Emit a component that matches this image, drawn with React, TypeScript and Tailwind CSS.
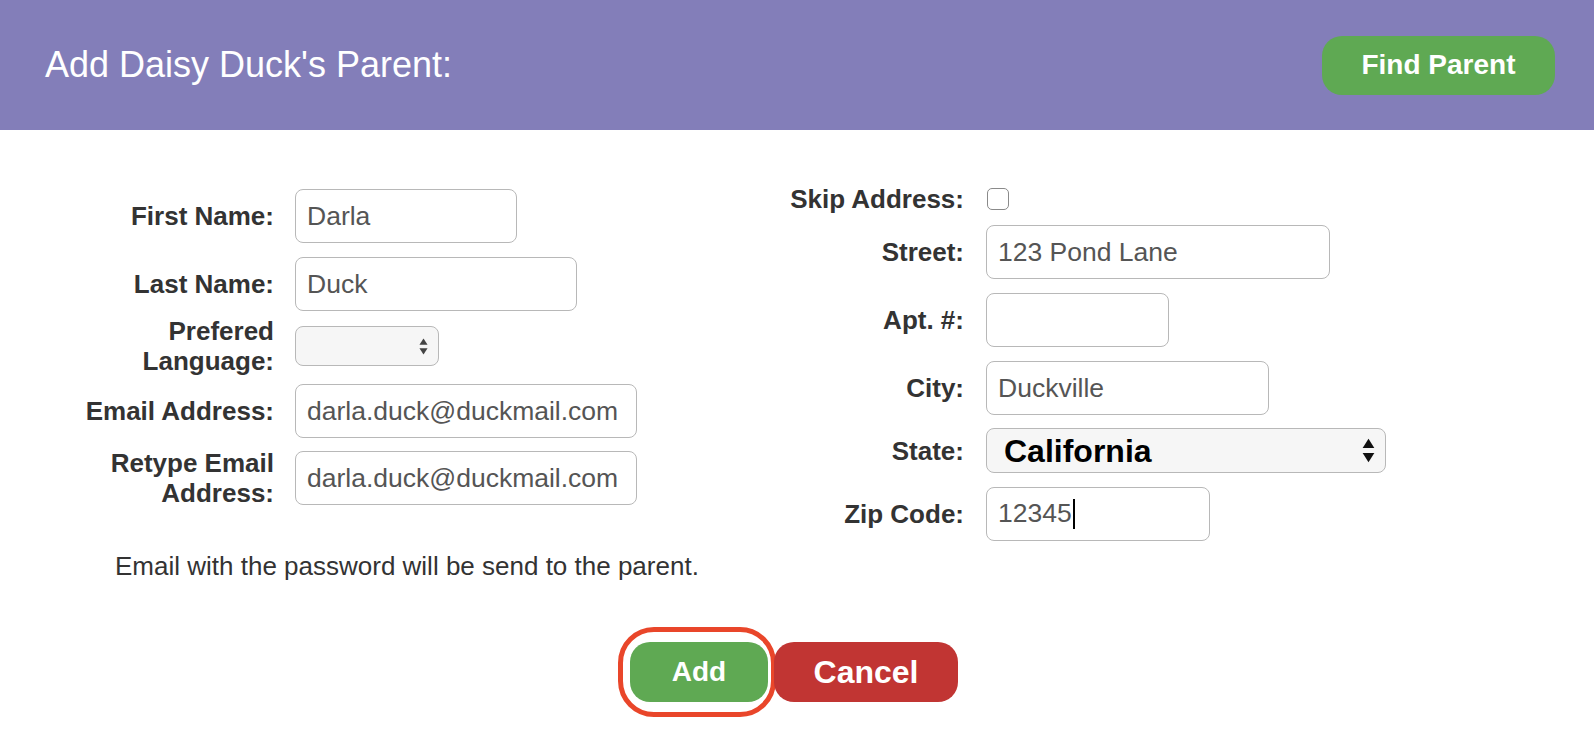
import React from "react";

const font = { fontFamily: '"Liberation Sans", Arial, Helvetica, sans-serif' };

const labelCls = "shrink-0 text-right font-bold text-[26px] leading-[30px] text-[#333]";
const inputCls =
  "h-[54px] rounded-[8px] border border-[#b8b8b8] bg-white px-[11px] text-[26.5px] text-[#555] outline-none";

function UpDown({ w, h, color }: { w: number; h: number; color: string }) {
  return (
    <svg width={w} height={h} viewBox="0 0 10 20" aria-hidden>
      <path d="M5 1 L9.5 8 L0.5 8 Z" fill={color} />
      <path d="M0.5 12 L9.5 12 L5 19 Z" fill={color} />
    </svg>
  );
}

function Row({
  label,
  width,
  children,
  className = "",
}: {
  label: React.ReactNode;
  width: string;
  children: React.ReactNode;
  className?: string;
}) {
  return (
    <div className={`flex items-center ${className}`}>
      <div className={`${labelCls} ${width}`}>{label}</div>
      {children}
    </div>
  );
}

export default function App() {
  return (
    <div className="min-h-[752px] w-full bg-white" style={font}>
      <header className="flex h-[130px] items-center justify-between bg-[#837eb9] pl-[45px] pr-[39px]">
        <h1 className="text-[36px] font-normal text-white">Add Daisy Duck's Parent:</h1>
        <button
          type="button"
          className="h-[59px] w-[233px] rounded-[20px] bg-[#5fa953] text-[28px] font-bold text-white"
        >
          Find Parent
        </button>
      </header>

      <div className="flex items-start pt-[54px]">
        {/* left column */}
        <div className="mt-[5px] flex w-[637px] flex-col">
          <Row label="First Name:" width="w-[274px]">
            <input readOnly value="Darla" className={`${inputCls} ml-[21px] w-[222px]`} />
          </Row>
          <Row label="Last Name:" width="w-[274px]" className="mt-[14px]">
            <input readOnly value="Duck" className={`${inputCls} ml-[21px] w-[282px]`} />
          </Row>
          <Row
            label={
              <>
                Prefered
                <br />
                Language:
              </>
            }
            width="w-[274px]"
            className="mt-[5px] h-[60px]"
          >
            <div className="ml-[21px] flex h-[40px] w-[144px] items-center justify-end rounded-[8px] border border-[#b8b8b8] bg-[#f6f6f6] pr-[10px]">
              <UpDown w={9} h={19} color="#444" />
            </div>
          </Row>
          <Row label="Email Address:" width="w-[274px]" className="mt-[8px]">
            <input
              readOnly
              value="darla.duck@duckmail.com"
              className={`${inputCls} ml-[21px] w-[342px]`}
            />
          </Row>
          <Row
            label={
              <>
                Retype Email
                <br />
                Address:
              </>
            }
            width="w-[274px]"
            className="mt-[10px] h-[60px]"
          >
            <input
              readOnly
              value="darla.duck@duckmail.com"
              className={`${inputCls} ml-[21px] w-[342px]`}
            />
          </Row>
        </div>

        {/* right column */}
        <div className="ml-[123px] flex flex-col">
          <Row label="Skip Address:" width="w-[204px]" className="h-[30px]">
            <span className="ml-[23px] block h-[22px] w-[22px] rounded-[5px] border border-[#8a8a8a] bg-white" />
          </Row>
          <Row label="Street:" width="w-[204px]" className="mt-[11px]">
            <input readOnly value="123 Pond Lane" className={`${inputCls} ml-[22px] w-[344px]`} />
          </Row>
          <Row label="Apt. #:" width="w-[204px]" className="mt-[14px]">
            <input readOnly value="" className={`${inputCls} ml-[22px] w-[183px]`} />
          </Row>
          <Row label="City:" width="w-[204px]" className="mt-[14px]">
            <input readOnly value="Duckville" className={`${inputCls} ml-[22px] w-[283px]`} />
          </Row>
          <Row label="State:" width="w-[204px]" className="mt-[13px]">
            <div className="ml-[22px] flex h-[45px] w-[400px] items-center justify-between rounded-[8px] border border-[#b8b8b8] bg-[#f6f6f6] pl-[17px] pr-[10px]">
              <span className="text-[32px] font-bold leading-none text-black">California</span>
              <UpDown w={13} h={27} color="#111" />
            </div>
          </Row>
          <Row label="Zip Code:" width="w-[204px]" className="mt-[14px]">
            <div className={`${inputCls} ml-[22px] flex w-[224px] items-center`}>
              <span>12345</span>
              <span className="ml-[1px] block h-[30px] w-[2px] bg-black" />
            </div>
          </Row>
        </div>
      </div>

      <p className="mt-[10px] pl-[115px] text-[26px] leading-[30px] text-[#333]">
        Email with the password will be send to the parent.
      </p>

      <div className="mt-[61px] flex justify-center gap-[6px] pr-[6px]">
        <div className="relative">
          <span className="pointer-events-none absolute -bottom-[15px] -left-[12px] -right-[8px] -top-[15px] rounded-[36px] border-[5px] border-[#e9462a]" />
          <button
            type="button"
            className="relative h-[60px] w-[138px] rounded-[20px] bg-[#5fa953] text-[28px] font-bold text-white"
          >
            Add
          </button>
        </div>
        <button
          type="button"
          className="relative h-[60px] w-[184px] rounded-[20px] bg-[#c13533] text-[32px] font-bold text-white"
        >
          Cancel
        </button>
      </div>
    </div>
  );
}
